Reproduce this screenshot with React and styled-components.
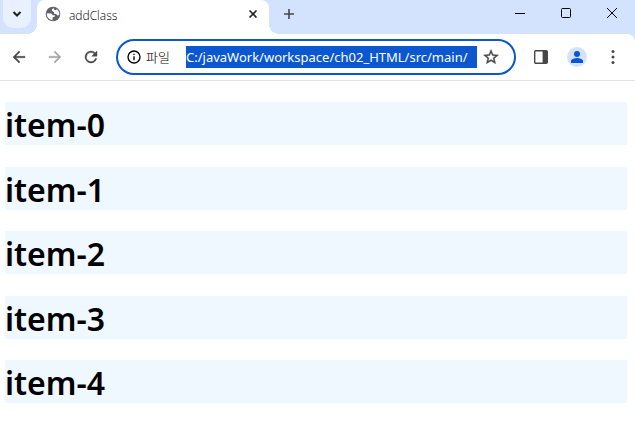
import React, { useState } from "react";
import styled, { createGlobalStyle } from "styled-components";

const GlobalStyle = createGlobalStyle`
  * { box-sizing: border-box; }
  body {
    margin: 0;
    background: #fff;
    color: #000;
    font-family: "Noto Sans", "Noto Sans CJK KR", sans-serif;
  }
  button, input { font: inherit; }
`;

const TabStrip = styled.header`
  display: flex;
  height: 34px;
  background: #d3e3fd;
`;

const IconButton = styled.button`
  display: grid;
  place-items: center;
  flex: none;
  width: 28px;
  height: 28px;
  padding: 0;
  border: 0;
  border-radius: 8px;
  background: transparent;
  color: ${(p) => p.$color || "#474747"};
  svg { display: block; }
`;

const TabSearchArea = styled.div`
  padding-left: 3px;
  width: 37px;
`;

const TabSearch = styled(IconButton)`
  border-radius: 0 0 10px 10px;
  background: #e9f0fe;
  color: #1f1f1f;
`;

const Tab = styled.div`
  position: relative;
  display: flex;
  align-items: center;
  flex: 0 1 232px;
  min-width: 0;
  padding: 0 2px 6px 8px;
  border-radius: 8px 8px 0 0;
  background: #fff;
  font-size: 12px;
  line-height: 16px;

  &::before, &::after {
    content: "";
    position: absolute;
    bottom: 0;
    width: 10px;
    height: 10px;
  }
  &::before {
    right: 100%;
    background: radial-gradient(circle at 0 0, transparent 10px, #fff 10px);
  }
  &::after {
    left: 100%;
    background: radial-gradient(circle at 100% 0, transparent 10px, #fff 10px);
  }
`;

const TabTitle = styled.span`
  flex: 1;
  padding: 4px 0 0 8px;
  color: #000;
  font-family: "Open Sans", sans-serif;
  font-weight: 300;
`;

const NewTab = styled(IconButton)`
  margin-left: 6px;
`;

const WindowControls = styled.div`
  display: flex;
  margin-left: auto;
`;

const WindowButton = styled(IconButton)`
  width: 46px;
  height: 26px;
  border-radius: 0;
  color: #000;
`;

const ToolbarBack = styled.div`
  background: #d3e3fd;
`;

const Toolbar = styled.nav`
  display: flex;
  align-items: center;
  height: 47px;
  padding: 0 8px 0 5px;
  border-bottom: 1px solid #e1e1e1;
  border-radius: 0 8px 0 0;
  background: #fff;
`;

const NavButtons = styled.div`
  display: flex;
  gap: 8px;
`;

const AddressBar = styled.form`
  display: flex;
  align-items: center;
  flex: 1;
  min-width: 0;
  height: 36px;
  margin: 0 11px;
  padding: 0 9px 0 8px;
  border: 2px solid #0b57d0;
  border-radius: 18px;
  color: #1f1f1f;
`;

const SchemeLabel = styled.label`
  display: flex;
  align-items: center;
  gap: 4px;
  flex: none;
  width: 60px;
  color: #000;
  font-family: "Noto Sans CJK KR", sans-serif;
  font-size: 13px;
  font-weight: 300;
  line-height: 20px;
`;

const AddressInput = styled.input`
  flex: 1;
  min-width: 0;
  height: 22px;
  padding: 0;
  border: 0;
  outline: 0;
  background: #0b57d0;
  color: #fff;
  font-size: 13px;
`;

const Actions = styled.div`
  display: flex;
  gap: 8px;
`;

const Page = styled.main`
  display: flow-root;
  padding: 0 8px 0 5px;
`;

const Item = styled.h1`
  padding-top: 2px;
  background: #f0f8ff;
  font-family: "Noto Sans", sans-serif;
  font-size: 32px;
  font-weight: 600;
  line-height: 41px;
`;

function Glyph({ size = 16, box = 24, bold = false, children }) {
  return (
    <svg
      width={size}
      height={size}
      viewBox={`0 0 ${box} ${box}`}
      fill="currentColor"
      stroke={bold ? "currentColor" : "none"}
      strokeWidth={bold ? 0.5 : undefined}
      aria-hidden="true"
    >
      {children}
    </svg>
  );
}

const items = [0, 1, 2, 3, 4];

export default function App() {
  const [address, setAddress] = useState("C:/javaWork/workspace/ch02_HTML/src/main/");
  return (
    <>
      <GlobalStyle />
      <TabStrip>
        <TabSearchArea>
          <TabSearch aria-label="Search tabs">
            <Glyph size={10} box={10}>
              <path d="M1.5 3 5 6.5 8.5 3" fill="none" stroke="currentColor" strokeWidth="2" />
            </Glyph>
          </TabSearch>
        </TabSearchArea>
        <Tab>
          <Glyph size={16} box={16}>
            <circle cx="8" cy="8" r="7.3" fill="#5f6368" />
            <path
              d="M8.6 1.9 7 3.4v1.5l2 1.2v1.7l2.2.1 1.1 1.5 1.9-.4A6.2 6.2 0 0 0 12 3.3l-1.5 1-1.3-.6zM1.8 7.2l4.4.2 1.5 1.8h2l.2 1.4-2.3 1v2.6A6.2 6.2 0 0 1 1.8 7.2z"
              fill="#fff"
            />
          </Glyph>
          <TabTitle>addClass</TabTitle>
          <IconButton aria-label="Close tab" $color="#1f1f1f">
            <Glyph size={10} box={10}>
              <path d="m1.5 1.5 7 7m0-7-7 7" stroke="currentColor" strokeWidth="1.6" />
            </Glyph>
          </IconButton>
        </Tab>
        <NewTab aria-label="New tab">
          <Glyph size={12} box={12}>
            <path d="M6 1v10M1 6h10" stroke="currentColor" strokeWidth="1.6" />
          </Glyph>
        </NewTab>
        <WindowControls>
          <WindowButton aria-label="Minimize">
            <Glyph size={10} box={10}>
              <path d="M0 5h10v1H0z" />
            </Glyph>
          </WindowButton>
          <WindowButton aria-label="Maximize">
            <Glyph size={10} box={10}>
              <rect x=".5" y=".5" width="9" height="9" rx="1" fill="none" stroke="currentColor" />
            </Glyph>
          </WindowButton>
          <WindowButton aria-label="Close">
            <Glyph size={10} box={10}>
              <path d="m0 0 10 10m0-10L0 10" stroke="currentColor" />
            </Glyph>
          </WindowButton>
        </WindowControls>
      </TabStrip>
      <ToolbarBack>
        <Toolbar aria-label="Browser toolbar">
          <NavButtons>
            <IconButton aria-label="Back">
              <Glyph size={18} bold>
                <path d="M20 11H7.8l5.6-5.6L12 4l-8 8 8 8 1.4-1.4L7.8 13H20z" />
              </Glyph>
            </IconButton>
            <IconButton aria-label="Forward" $color="#a6a6a6">
              <Glyph size={18} bold>
                <path d="m12 4-1.4 1.4 5.6 5.6H4v2h12.2l-5.6 5.6L12 20l8-8z" />
              </Glyph>
            </IconButton>
            <IconButton aria-label="Reload">
              <Glyph size={18} bold>
                <path d="M17.65 6.35A8 8 0 1 0 19.73 14h-2.08A6 6 0 1 1 12 6c1.66 0 3.14.69 4.22 1.78L13 11h7V4z" />
              </Glyph>
            </IconButton>
          </NavButtons>
          <AddressBar onSubmit={(e) => e.preventDefault()}>
            <SchemeLabel htmlFor="address">
              <Glyph size={16}>
                <path d="M11 17h2v-6h-2zm0-8h2V7h-2zM12 2a10 10 0 1 0 0 20 10 10 0 0 0 0-20zm0 18a8 8 0 1 1 0-16 8 8 0 0 1 0 16z" />
              </Glyph>
              파일
            </SchemeLabel>
            <AddressInput id="address" value={address} onChange={(e) => setAddress(e.target.value)} />
            <IconButton type="button" aria-label="Bookmark this page">
              <Glyph size={18} bold>
                <path d="m22 9.24-7.19-.62L12 2 9.19 8.63 2 9.24l5.46 4.73L5.82 21 12 17.27 18.18 21l-1.63-7.03zM12 15.4l-3.76 2.27 1-4.28-3.32-2.88 4.38-.38L12 6.1l1.71 4.04 4.38.38-3.32 2.88 1 4.28z" />
              </Glyph>
            </IconButton>
          </AddressBar>
          <Actions>
            <IconButton aria-label="Side panel">
              <Glyph size={14} box={14}>
                <rect x=".7" y=".7" width="12.6" height="12.6" rx="1" fill="none" stroke="currentColor" strokeWidth="1.4" />
                <path d="M8.6 1H13v12H8.6z" />
              </Glyph>
            </IconButton>
            <IconButton aria-label="Profile">
              <Glyph size={20} box={20}>
                <circle cx="10" cy="10" r="10" fill="#d3e3fd" />
                <circle cx="10" cy="7" r="3" fill="#0b57d0" />
                <path d="M4 16v-2c0-2 4-3 6-3s6 1 6 3v2z" fill="#0b57d0" />
              </Glyph>
            </IconButton>
            <IconButton aria-label="Menu">
              <Glyph size={14} box={14}>
                <circle cx="7" cy="1.6" r="1.5" />
                <circle cx="7" cy="7" r="1.5" />
                <circle cx="7" cy="12.4" r="1.5" />
              </Glyph>
            </IconButton>
          </Actions>
        </Toolbar>
      </ToolbarBack>
      <Page>
        {items.map((n) => (
          <Item key={n}>item-{n}</Item>
        ))}
      </Page>
    </>
  );
}
